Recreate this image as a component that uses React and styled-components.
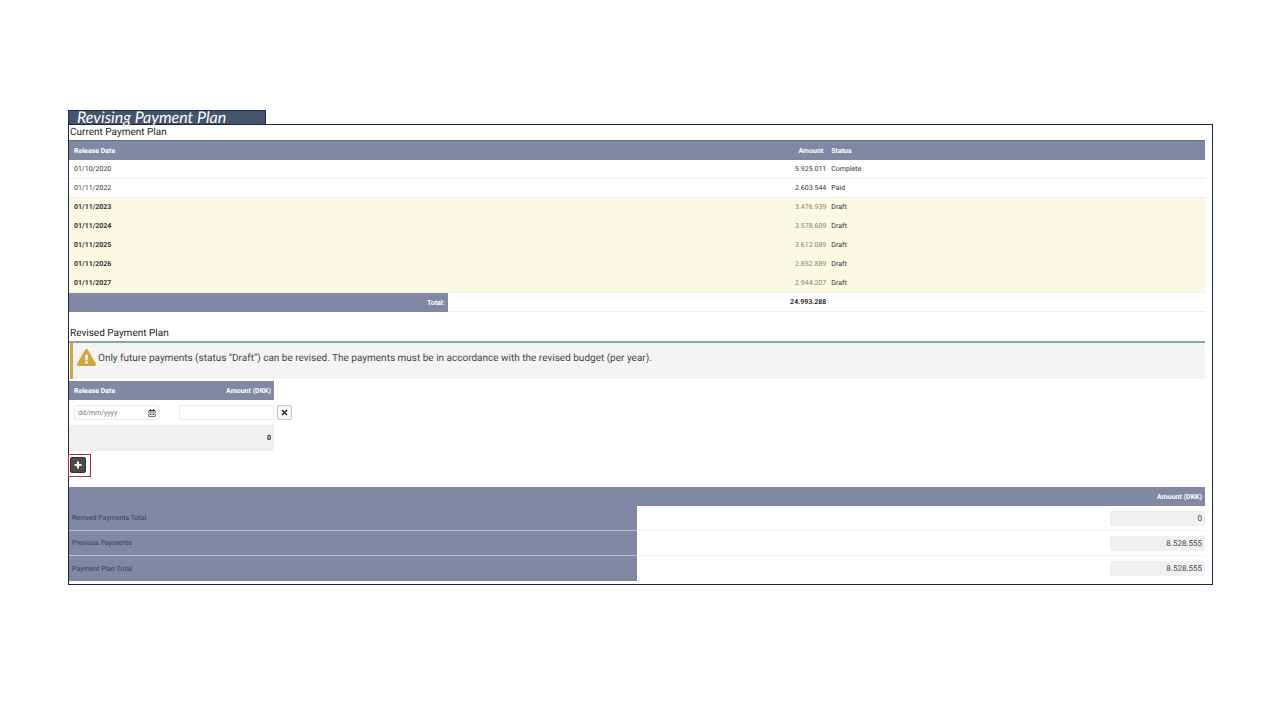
import React, { useState } from 'react';

import styled, { createGlobalStyle } from 'styled-components';
import { FaExclamationTriangle, FaRegCalendarAlt } from 'react-icons/fa';

const GlobalStyle = createGlobalStyle`
    * {
        box-sizing: border-box;
    }

    body {
        margin: 0;
        background-color: #ffffff;
        color: #333333;
        font-family: Roboto, sans-serif;
        font-size: 7px;
        text-rendering: geometricPrecision;
    }

    button, input {
        font-family: inherit;
        font-size: inherit;
        text-rendering: inherit;
    }
`;

const PageStyled = styled.main`
    padding: 110px 67px 40px 68px;
`;

const TitleStyled = styled.h1`
    width: 198px;
    height: 14px;
    margin: 0;
    padding-left: 8px;

    border: 1px solid #1f2f4a;
    border-bottom: none;
    background-color: #44546a;
    color: #ffffff;

    font-family: Lato, sans-serif;
    font-size: 16px;
    font-style: italic;
    font-weight: 400;
    line-height: 13px;
    white-space: nowrap;
`;

const PanelStyled = styled.div`
    padding: 0 7px 3px 0;
    border: 1px solid #1a2744;
`;

const SectionTitleStyled = styled.h2`
    margin: 0;
    padding-left: 1px;
    border-bottom: ${({ $rule }) => $rule}px solid ${({ $rule }) => ($rule > 1 ? '#86a6a5' : '#4a7a86')};

    color: #222222;
    font-size: 10px;
    font-weight: 400;
    line-height: 15px;
`;

const TableStyled = styled.table`
    width: ${({ $width }) => $width || '100%'};
    table-layout: fixed;
    border-collapse: separate;
    border-spacing: 0;
`;

const HeadCell = styled.th`
    height: 19px;
    padding: 0 3px 0 5px;

    background-color: #8088a3;
    color: #ffffff;
    font-weight: 700;
    text-align: ${({ $align }) => $align || 'left'};
`;

const PlanRow = styled.tr`
    background-color: ${({ $draft }) => ($draft ? '#fbf8e3' : '#ffffff')};

    td {
        height: 19px;
        border-bottom: 1px solid ${({ $draft }) => ($draft ? '#f8f5e0' : '#eeeeee')};
    }
`;

const TextCell = styled.td`
    padding: 0 5px;
    color: #333333;
    font-weight: ${({ $bold }) => ($bold ? 700 : 400)};
`;

const AmountCell = styled.td`
    padding: 0;
    color: ${({ $draft }) => ($draft ? '#8a8570' : '#333333')};
    font-weight: ${({ $bold }) => ($bold ? 700 : 400)};
    text-align: right;
`;

const TotalLabel = styled(HeadCell)`
    text-align: right;
`;

const RevisedSection = styled.section`
    padding-top: 14px;
`;

const AlertStyled = styled.div`
    display: flex;
    align-items: flex-start;
    gap: 2px;
    height: 36px;
    margin: 0 0 2px 1px;
    padding: 5px 4px;

    border-left: 3px solid #d0a73c;
    background-color: #f4f4f4;
    color: #444444;
    font-size: 10px;
    line-height: 21px;

    svg {
        flex: none;
        width: 19px;
        height: 19px;
        color: #d0a73c;
    }
`;

const EntryCell = styled.td`
    height: 25px;
    padding: 0 0 0 ${({ $left }) => $left || 0}px;
`;

const EntrySum = styled.td`
    height: 26px;
    padding: 0 3px;

    background-color: #f0f0f0;
    color: #222222;
    font-weight: 700;
    text-align: right;
`;

const FieldStyled = styled.div`
    display: flex;
    align-items: center;
    width: ${({ $width }) => $width}px;
    height: 15px;
    padding: 0 3px;

    border: 1px solid #ebebeb;
    border-radius: 2px;
    background-color: #ffffff;
`;

const InputStyled = styled.input`
    flex: 1;
    min-width: 0;
    padding: 0;

    border: none;
    outline: none;
    background: none;
    color: #444444;
    text-align: ${({ $align }) => $align || 'left'};

    &::placeholder {
        color: #777777;
    }
`;

const IconButton = styled.button`
    display: flex;
    padding: 0;

    border: none;
    background: none;
    color: #444444;
    cursor: pointer;
`;

const RemoveButton = styled(IconButton)`
    align-items: center;
    justify-content: center;
    width: 15px;
    height: 15px;

    border: 1px solid #c4c4c4;
    border-radius: 2px;
    background-color: #f8f8f8;
    color: #333333;
`;

const AddFrame = styled.div`
    width: 21px;
    margin: 4px 0 11px;
    padding: 2px 1px 3px;
    outline: 1px solid #c3272b;
`;

const AddButton = styled(IconButton)`
    align-items: center;
    justify-content: center;
    width: 16px;
    height: 16px;

    border: 1px solid #333333;
    border-radius: 2px;
    background-color: #4a4a4a;
    color: #ffffff;
`;

const SummaryLabel = styled.th`
    height: 25px;
    padding: 0 3px;
    border-bottom: ${({ $last }) => ($last ? 'none' : '1px solid #b9bed0')};

    background-color: #8088a3;
    color: #3c3f4c;
    font-weight: 400;
    text-align: left;
`;

const SummaryCell = styled.td`
    padding: 0;
    border-bottom: ${({ $last }) => ($last ? 'none' : '1px solid #f3f3f3')};
`;

const SummaryValue = styled.output`
    display: block;
    width: 95px;
    margin-left: auto;
    padding-right: 3px;

    border-radius: 2px;
    background-color: #f0f0f0;
    color: #444444;
    font-size: 8px;
    line-height: 15px;
    text-align: right;
`;

const PAYMENTS = [
    { date: '01/10/2020', amount: '5.925.011', status: 'Complete' },
    { date: '01/11/2022', amount: '2.603.544', status: 'Paid' },
    { date: '01/11/2023', amount: '3.476.939', status: 'Draft' },
    { date: '01/11/2024', amount: '3.578.609', status: 'Draft' },
    { date: '01/11/2025', amount: '3.612.089', status: 'Draft' },
    { date: '01/11/2026', amount: '2.852.889', status: 'Draft' },
    { date: '01/11/2027', amount: '2.944.207', status: 'Draft' },
];

const SUMMARY = [
    { label: 'Revised Payments Total', value: '0' },
    { label: 'Previous Payments', value: '8.528.555' },
    { label: 'Payment Plan Total', value: '8.528.555' },
];

function PlusIcon() {
    return (
        <svg width="8" height="8" viewBox="0 0 8 8" fill="currentColor" aria-hidden="true">
            <path d="M3 .5h2V3h2.5v2H5v2.5H3V5H.5V3H3z" />
        </svg>
    );
}

function CrossIcon() {
    return (
        <svg width="7" height="7" viewBox="0 0 7 7" stroke="currentColor" strokeWidth="1.6" aria-hidden="true">
            <path d="M1 1l5 5M6 1L1 6" />
        </svg>
    );
}

function CurrentPlan() {
    return (
        <section>
            <SectionTitleStyled $rule={1}>Current Payment Plan</SectionTitleStyled>
            <TableStyled>
                <thead>
                    <tr>
                        <HeadCell scope="col">Release Date</HeadCell>
                        <HeadCell scope="col" $align="right">Amount</HeadCell>
                        <HeadCell scope="col">Status</HeadCell>
                    </tr>
                </thead>
                <tbody>
                    {PAYMENTS.map(({ date, amount, status }) => {
                        const draft = status === 'Draft';
                        return (
                            <PlanRow key={date} $draft={draft}>
                                <TextCell $bold={draft}>{date}</TextCell>
                                <AmountCell $draft={draft}>{amount}</AmountCell>
                                <TextCell>{status}</TextCell>
                            </PlanRow>
                        );
                    })}
                </tbody>
                <tfoot>
                    <PlanRow>
                        <TotalLabel scope="row">Total:</TotalLabel>
                        <AmountCell $bold>24.993.288</AmountCell>
                        <td />
                    </PlanRow>
                </tfoot>
            </TableStyled>
        </section>
    );
}

function RevisedPlan() {
    const [rows, setRows] = useState([{ id: 1, date: '', amount: '' }]);

    const update = (id, change) => setRows(rows.map((row) => (row.id === id ? { ...row, ...change } : row)));
    const sum = rows.reduce((total, row) => total + (Number(row.amount) || 0), 0);

    return (
        <RevisedSection>
            <SectionTitleStyled $rule={2}>Revised Payment Plan</SectionTitleStyled>
            <AlertStyled role="note">
                <FaExclamationTriangle />
                Only future payments (status "Draft") can be revised. The payments must be in accordance with the revised budget (per year).
            </AlertStyled>

            <TableStyled $width="224px">
                <colgroup>
                    <col width="105" />
                    <col width="100" />
                    <col />
                </colgroup>
                <thead>
                    <tr>
                        <HeadCell scope="col">Release Date</HeadCell>
                        <HeadCell scope="col" $align="right">Amount (DKK)</HeadCell>
                        <td />
                    </tr>
                </thead>
                <tbody>
                    {rows.map((row) => (
                        <tr key={row.id}>
                            <EntryCell $left={5}>
                                <FieldStyled $width={86}>
                                    <InputStyled
                                        aria-label="Release Date"
                                        placeholder="dd/mm/yyyy"
                                        value={row.date}
                                        onChange={(e) => update(row.id, { date: e.target.value })}
                                    />
                                    <IconButton type="button" aria-label="Open calendar">
                                        <FaRegCalendarAlt size={8} />
                                    </IconButton>
                                </FieldStyled>
                            </EntryCell>
                            <EntryCell $left={5}>
                                <FieldStyled $width={95}>
                                    <InputStyled
                                        aria-label="Amount (DKK)"
                                        $align="right"
                                        value={row.amount}
                                        onChange={(e) => update(row.id, { amount: e.target.value })}
                                    />
                                </FieldStyled>
                            </EntryCell>
                            <EntryCell $left={3}>
                                <RemoveButton
                                    type="button"
                                    aria-label="Remove payment"
                                    onClick={() => setRows(rows.filter(({ id }) => id !== row.id))}
                                >
                                    <CrossIcon />
                                </RemoveButton>
                            </EntryCell>
                        </tr>
                    ))}
                </tbody>
                <tfoot>
                    <tr>
                        <EntrySum colSpan={2}>{sum}</EntrySum>
                    </tr>
                </tfoot>
            </TableStyled>

            <AddFrame>
                <AddButton
                    type="button"
                    aria-label="Add payment"
                    onClick={() => setRows([...rows, { id: Date.now(), date: '', amount: '' }])}
                >
                    <PlusIcon />
                </AddButton>
            </AddFrame>
        </RevisedSection>
    );
}

function Summary() {
    return (
        <TableStyled>
            <thead>
                <tr>
                    <HeadCell as="td" />
                    <HeadCell scope="col" $align="right">Amount (DKK)</HeadCell>
                </tr>
            </thead>
            <tbody>
                {SUMMARY.map(({ label, value }, i) => {
                    const last = i === SUMMARY.length - 1;
                    return (
                        <tr key={label}>
                            <SummaryLabel scope="row" $last={last}>{label}</SummaryLabel>
                            <SummaryCell $last={last}>
                                <SummaryValue>{value}</SummaryValue>
                            </SummaryCell>
                        </tr>
                    );
                })}
            </tbody>
        </TableStyled>
    );
}

function App() {
    return (
        <PageStyled>
            <GlobalStyle />
            <TitleStyled>Revising Payment Plan</TitleStyled>
            <PanelStyled>
                <CurrentPlan />
                <RevisedPlan />
                <Summary />
            </PanelStyled>
        </PageStyled>
    );
}

export default App;
